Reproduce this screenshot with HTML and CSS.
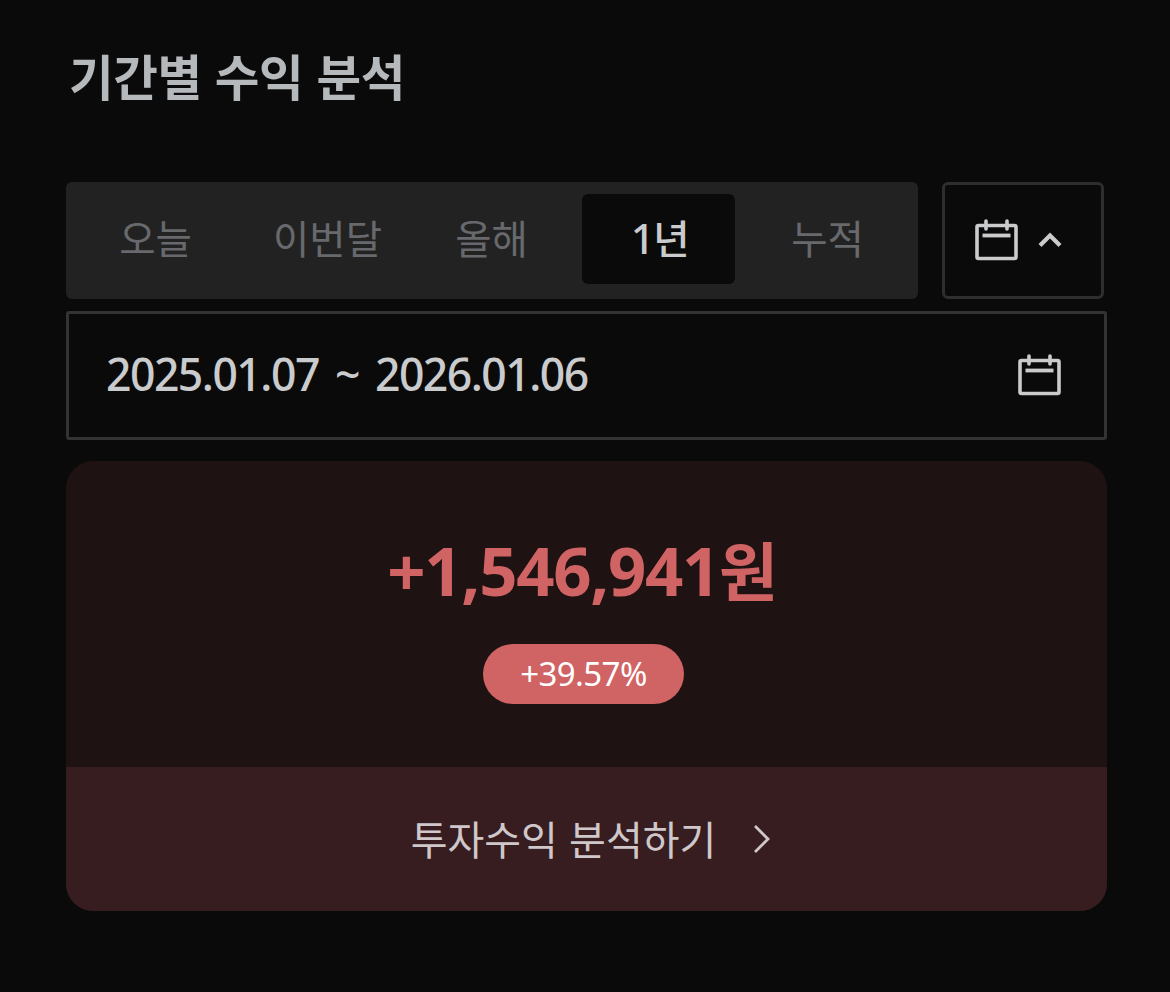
FILE: index.html
```
<!DOCTYPE html>
<html lang="ko">
	<head>
		<meta charset="utf-8">
		<title>기간별 수익 분석</title>
		<meta name="viewport" content="width=device-width, initial-scale=1">
		<link rel="stylesheet" href="styles.css">
	</head>
	<body>
		<svg class="sprite" width="0" height="0">
			<symbol id="calendar" viewBox="0 0 44 44">
				<rect x="2" y="7.5" width="39" height="33" rx="1.5" fill="none" stroke="currentColor" stroke-width="3.6"/>
				<path d="M11 3v8M32 3v8" stroke="currentColor" stroke-width="3.6" stroke-linecap="round"/>
				<path d="M7.500 17.500h28" stroke="currentColor" stroke-width="3.8"/>
			</symbol>
		</svg>
		<main>
			<h1>기간별 수익 분석</h1>
			<div class="filters">
				<nav class="tabs">
					<button>오늘</button>
					<button class="month">이번달</button>
					<button>올해</button>
					<button class="active"><span class="one">1</span>년</button>
					<button>누적</button>
				</nav>
				<button class="toggle">
					<svg class="calendar"><use href="#calendar"/></svg>
					<svg class="chevron" viewBox="0 0 24 16" fill="none" stroke="currentColor" stroke-width="4.2"><path d="M2 13.500 12 3.500l10 10"/></svg>
				</button>
			</div>
			<div class="range">
				<span class="dates">2025.01.07 ~ 2026.01.06</span>
				<svg class="calendar"><use href="#calendar"/></svg>
			</div>
			<section class="card">
				<div class="result">
					<div class="amount">+1,546,941<span class="won">원</span></div>
					<div class="rate">+39.57%</div>
				</div>
				<a class="more" href="#">
					<span>투자수익 분석하기</span>
					<svg class="arrow" viewBox="0 0 16 28" fill="none" stroke="currentColor" stroke-width="2.800"><path d="M1 1 14 14 1 27"/></svg>
				</a>
			</section>
		</main>
	</body>
</html>
```

FILE: styles.css
```
* { box-sizing: border-box; }
body {
	margin: 0;
	background: #0a0a0a;
	color: #cacbcd;
	font-family: "Noto Sans", "Noto Sans CJK KR", sans-serif;
}
.sprite { display: block; }
main {
	width: 1041px;
	margin-left: 66px;
	padding-top: 42px;
}
h1 {
	margin: 0 0 74px 3px;
	height: 66px;
	color: #b6b9bc;
	font: bold 48.5px/66px "Noto Sans CJK KR", sans-serif;
	letter-spacing: -0.4px;
}
button {
	margin: 0;
	padding: 0;
	border: 0;
	background: none;
	color: inherit;
}
.filters {
	display: flex;
	gap: 24px;
	height: 117px;
}
.tabs {
	display: flex;
	gap: 15px;
	width: 852px;
	padding: 12px 15px 15px 12px;
	background: #222;
	border-radius: 6px;
}
.tabs button {
	width: 153px;
	padding: 0 0 4px 2px;
	border-radius: 6px;
	color: #68696c;
	font: 39.5px/86px "Noto Sans CJK KR", sans-serif;
	white-space: nowrap;
}
.tabs .month { padding-left: 10px; }
.tabs .active {
	background: #0a0a0a;
	color: #cacbcd;
	font-weight: 500;
	letter-spacing: -1.5px;
}
.one { font-family: "Noto Sans", sans-serif; font-size: 42px; }
.toggle {
	display: flex;
	align-items: center;
	gap: 19px;
	width: 162px;
	padding: 0 0 2px 30px;
	border: 3px solid #2e2e2e;
	border-radius: 6px;
}
.calendar { width: 44px; height: 44px; }
.chevron { width: 24px; height: 16px; }
.range {
	display: flex;
	align-items: center;
	justify-content: space-between;
	height: 129px;
	margin: 12px 0 21px;
	padding: 0 42px 2px 37px;
	border: 3px solid #333;
	border-radius: 3px;
}
.dates {
	margin-top: -2px;
	font-size: 44.5px;
	font-weight: 500;
	letter-spacing: -1.5px;
	word-spacing: 6px;
}
.card {
	overflow: hidden;
	border-radius: 27px;
	background: #1e1212;
}
.result {
	display: flex;
	flex-direction: column;
	align-items: center;
	height: 306px;
	padding-top: 67px;
	color: #d06364;
}
.amount {
	height: 80px;
	margin-right: 9px;
	font-size: 67px;
	font-weight: bold;
	line-height: 80px;
	letter-spacing: -1.3px;
}
.won { font-family: "Noto Sans CJK KR", sans-serif; font-size: 64px; }
.rate {
	width: 201px;
	height: 60px;
	margin: 36px 6px 0 0;
	border-radius: 30px;
	background: #d06364;
	color: #fff;
	font-size: 33px;
	line-height: 60px;
	letter-spacing: -0.6px;
	text-align: center;
}
.more {
	display: flex;
	align-items: center;
	justify-content: center;
	gap: 38px;
	height: 144px;
	padding: 0 0 2px 8px;
	background: #371d1f;
	color: #cfc7ca;
	font: 40px/60px "Noto Sans CJK KR", sans-serif;
	text-decoration: none;
}
.arrow { width: 16px; height: 28px; margin-top: 2px; }
```
